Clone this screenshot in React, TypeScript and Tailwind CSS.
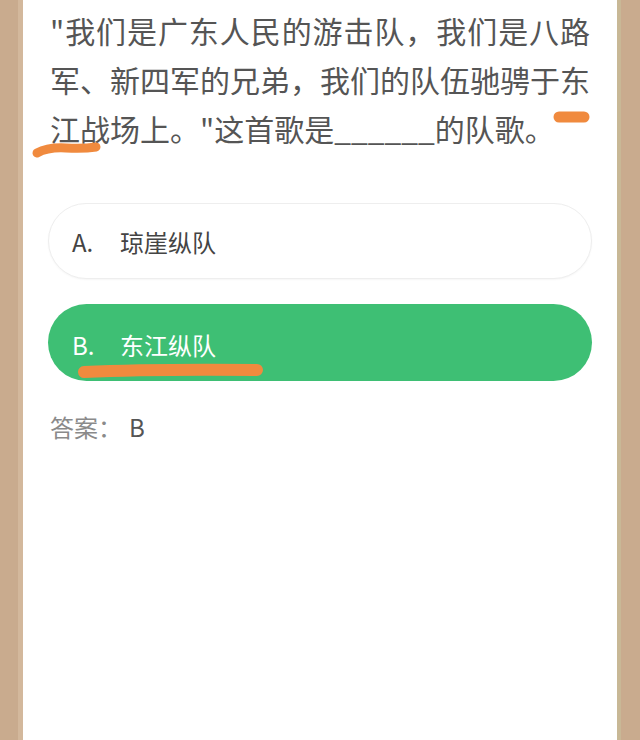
import React from 'react'

const font = { fontFamily: '"Noto Sans CJK SC", "Noto Sans", sans-serif' }

function Option({ label, text, active }: { label: string; text: string; active?: boolean }) {
    return (
        <div
            className={
                active
                    ? 'h-[77px] rounded-full bg-[#3ebf74] flex items-center pl-[24px] pt-[4px] text-white text-[24px]'
                    : 'h-[76px] rounded-full bg-white border border-[#eeeeee] shadow-[0_1px_2px_rgba(0,0,0,0.04)] flex items-center pl-[23px] pt-[2px] text-[#444444] text-[24px]'
            }
        >
            <span className="w-[48px]">{label}</span>
            <span>{text}</span>
        </div>
    )
}

export default function App() {
    return (
        <div className="relative w-[640px] h-[740px] flex bg-[#c9ab8e] overflow-hidden" style={font}>
            <div className="w-[23px] flex justify-end">
                <div className="w-[5px] bg-[#d3b89c]" />
            </div>

            <div className="flex-1 bg-white px-[25px] pt-[6px]">
                <div className="px-[2px] text-[30px] leading-[49px] text-[#555555]">
                    <div className="text-justify [text-align-last:justify]">"我们是广东人民的游击队，我们是八路</div>
                    <div className="text-justify [text-align-last:justify]">军、新四军的兄弟，我们的队伍驰骋于东</div>
                    <div>江战场上。"这首歌是______的队歌。</div>
                </div>

                <div className="mt-[50px] flex flex-col gap-[25px]">
                    <Option label="A." text="琼崖纵队" />
                    <Option label="B." text="东江纵队" active />
                </div>

                <div className="mt-[31px] pl-[2px] text-[24px] leading-[30px] flex">
                    <span className="text-[#8a8a8a]">答案：</span>
                    <span className="ml-[7px] text-[#555555]">B</span>
                </div>
            </div>

            <div className="w-[23px] flex">
                <div className="w-[4px] bg-[#c8b896]" />
            </div>

            {/* hand-drawn marks */}
            <svg className="absolute inset-0 pointer-events-none" width="640" height="740" viewBox="0 0 640 740">
                <g fill="none" stroke="#f08a3e" strokeLinecap="round">
                    <path d="M37 153 Q 48 147 66 148 T 96 147" strokeWidth="9" />
                    <path d="M559 117 L 584 117" strokeWidth="11" />
                    <path d="M84 372 Q 150 369 257 370" strokeWidth="12" />
                </g>
            </svg>
        </div>
    )
}
